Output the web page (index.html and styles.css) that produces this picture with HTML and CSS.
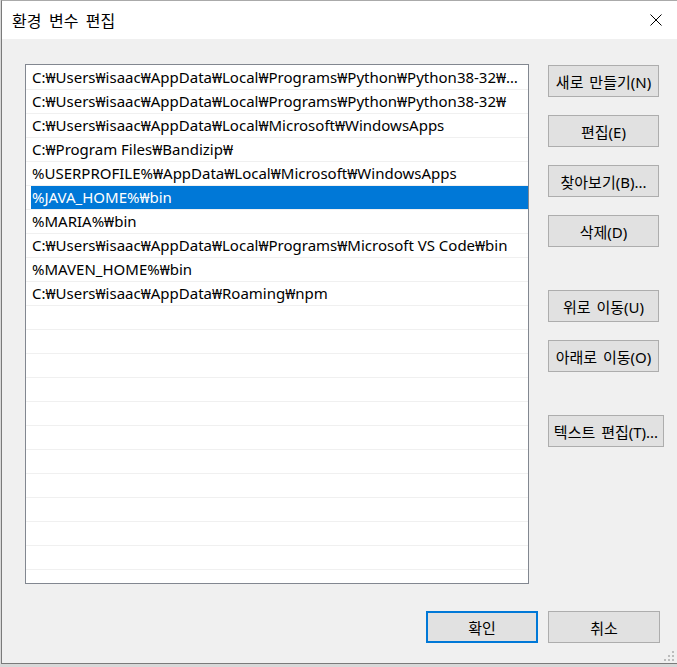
FILE: index.html
```html
<!DOCTYPE html>
<html lang="ko">
<head>
    <meta charset="UTF-8">
    <meta name="viewport" content="width=device-width, initial-scale=1.0">
    <title>환경 변수 편집</title>
    <link rel="stylesheet" href="styles.css">
</head>
<body>
  <div class="ventana">
    <!-- Barra de titulo -->
    <div class="titulo">
      <span class="titulo-texto">환경 변수 편집</span>
      <span class="cerrar">
        <svg width="12" height="12" viewBox="0 0 12 12">
          <path d="M0.5 0.5 L11.5 11.5 M11.5 0.5 L0.5 11.5" stroke="#000" stroke-width="1" fill="none"/>
        </svg>
      </span>
    </div>

    <div class="contenido">
      <div class="principal">
        <div class="lista">
          <div class="fila"><span class="texto">C:₩Users₩isaac₩AppData₩Local₩Programs₩Python₩Python38-32₩Scripts₩</span></div>
          <div class="fila"><span class="texto">C:₩Users₩isaac₩AppData₩Local₩Programs₩Python₩Python38-32₩</span></div>
          <div class="fila"><span class="texto">C:₩Users₩isaac₩AppData₩Local₩Microsoft₩WindowsApps</span></div>
          <div class="fila"><span class="texto">C:₩Program Files₩Bandizip₩</span></div>
          <div class="fila"><span class="texto">%USERPROFILE%₩AppData₩Local₩Microsoft₩WindowsApps</span></div>
          <div class="fila seleccionada"><span class="texto">%JAVA_HOME%₩bin</span></div>
          <div class="fila"><span class="texto">%MARIA%₩bin</span></div>
          <div class="fila"><span class="texto">C:₩Users₩isaac₩AppData₩Local₩Programs₩Microsoft VS Code₩bin</span></div>
          <div class="fila"><span class="texto">%MAVEN_HOME%₩bin</span></div>
          <div class="fila"><span class="texto">C:₩Users₩isaac₩AppData₩Roaming₩npm</span></div>
          <div class="fila"></div>
          <div class="fila"></div>
          <div class="fila"></div>
          <div class="fila"></div>
          <div class="fila"></div>
          <div class="fila"></div>
          <div class="fila"></div>
          <div class="fila"></div>
          <div class="fila"></div>
          <div class="fila"></div>
          <div class="fila"></div>
          <div class="fila"></div>
        </div>

        <div class="botones">
          <button class="btn">새로 만들기(N)</button>
          <button class="btn">편집(E)</button>
          <button class="btn">찾아보기(B)...</button>
          <button class="btn">삭제(D)</button>
          <button class="btn separado">위로 이동(U)</button>
          <button class="btn">아래로 이동(O)</button>
          <button class="btn separado ancho">텍스트 편집(T)...</button>
        </div>
      </div>

      <div class="pie">
        <button class="btn btn-pie activo">확인</button>
        <button class="btn btn-pie">취소</button>
      </div>
    </div>

    <svg class="agarre" width="12" height="12" viewBox="0 0 12 12">
      <rect x="9" y="1" width="2" height="2" fill="#bcbcbc"/>
      <rect x="5" y="5" width="2" height="2" fill="#bcbcbc"/>
      <rect x="9" y="5" width="2" height="2" fill="#bcbcbc"/>
      <rect x="1" y="9" width="2" height="2" fill="#bcbcbc"/>
      <rect x="5" y="9" width="2" height="2" fill="#bcbcbc"/>
      <rect x="9" y="9" width="2" height="2" fill="#bcbcbc"/>
    </svg>
  </div>
</body>
</html>
```

FILE: styles.css
```css
body {
  font-family: 'Noto Sans', 'Noto Sans CJK KR', sans-serif;
  font-size: 15px;
  background-color: #d8d8d8;
  margin: 0;
  padding: 0;
  color: #000000;
  overflow: hidden;
}

/* Ventana */
.ventana {
  position: relative;
  margin-left: 1px;
  width: 676px;
  height: 664px;
  box-sizing: border-box;
  border: 1px solid #7a7a7a;
  border-top-color: #aaaaaa;
  border-right: none;
  display: flex;
  flex-direction: column;
}

/* Barra de titulo */
.titulo {
  height: 38px;
  background-color: #ffffff;
  display: flex;
  align-items: center;
  justify-content: space-between;
  padding-left: 10px;
}

.titulo-texto {
  font-family: 'Noto Sans CJK KR', sans-serif;
  font-size: 16px;
  word-spacing: 3px;
}

.cerrar {
  width: 42px;
  height: 38px;
  display: flex;
  align-items: center;
  justify-content: center;
}

/* Contenido */
.contenido {
  flex: 1;
  background-color: #f0f0f0;
  padding: 25px 17px 0 23px;
}

.principal {
  display: flex;
  gap: 19px;
}

.lista {
  flex-shrink: 0;
  width: 504px;
  height: 520px;
  box-sizing: border-box;
  border: 1px solid #828790;
  background-color: #ffffff;
  padding-top: 1px;
  overflow: hidden;
}

.fila {
  height: 24px;
  box-sizing: border-box;
  border-bottom: 1px solid #f0f0f0;
  padding-left: 5px;
  display: flex;
}

.texto {
  flex: 1;
  min-width: 0;
  padding-left: 1px;
  line-height: 23px;
  white-space: nowrap;
  overflow: hidden;
  text-overflow: ellipsis;
  padding-right: 3px;
}

.seleccionada .texto {
  background-color: #0078d7;
  color: #ffffff;
}

/* Botones */
.botones {
  flex-shrink: 0;
  display: flex;
  flex-direction: column;
  align-items: flex-start;
  gap: 18px;
  padding-top: 1px;
}

.btn {
  font-family: 'Noto Sans', 'Noto Sans CJK KR', sans-serif;
  font-size: 15px;
  word-spacing: 2px;
  width: 111px;
  height: 32px;
  padding: 0;
  background-color: #e1e1e1;
  border: 1px solid #adadad;
  color: #000000;
  cursor: pointer;
  white-space: nowrap;
}

.separado {
  margin-top: 25px;
}

.ancho {
  width: 116px;
}

.pie {
  display: flex;
  justify-content: flex-end;
  gap: 10px;
  margin-top: 27px;
}

.btn-pie {
  width: 112px;
}

.activo {
  border: 2px solid #0078d7;
}

.agarre {
  position: absolute;
  right: 2px;
  bottom: 1px;
}
```
